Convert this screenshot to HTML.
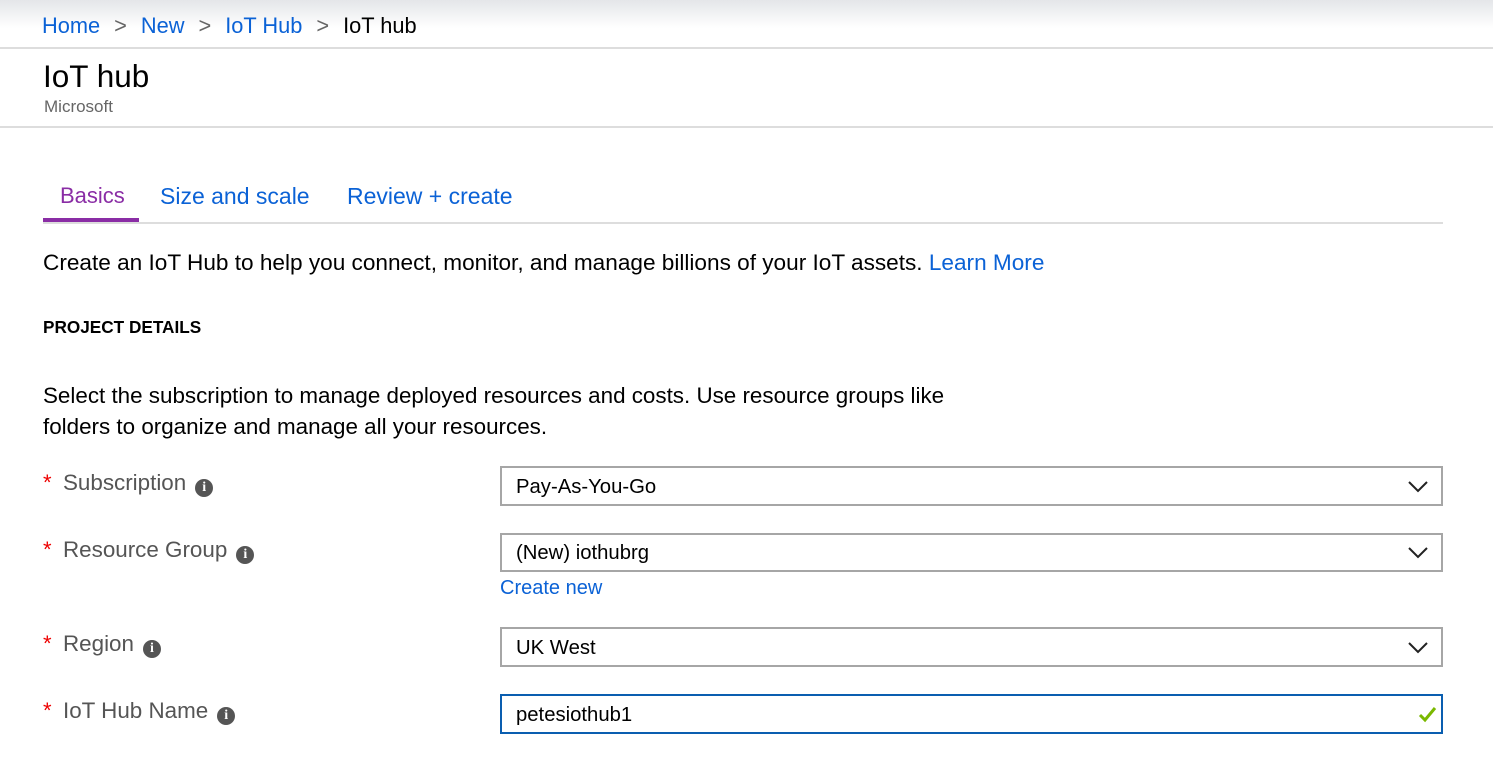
<!DOCTYPE html>
<html><head><meta charset="utf-8"><style>
body{margin:0;width:1493px;height:775px;background:#fff;font-family:"Liberation Sans",sans-serif;position:relative;overflow:hidden;color:#000}
.a{position:absolute;white-space:nowrap}
.blue{color:#0b62d6}
.hdr{position:absolute;left:0;top:0;width:1493px;height:47px;background:linear-gradient(#e4e6e9,#fff 60%);border-bottom:2px solid #ddd}
.box{position:absolute;left:500px;width:939px;border:2px solid #a6a6a6;background:#fff}
.box span{position:absolute;left:14px;font-size:20.3px}
.lab{font-size:22.4px;color:#555}
.star{color:#e00;font-size:22px;display:inline-block;width:20px}
.info{display:inline-block;width:18px;height:18px;border-radius:50%;background:#555;color:#fff;font-size:14px;font-weight:bold;text-align:center;line-height:18px;font-family:"Liberation Serif",serif;vertical-align:-1px;margin-left:9px}
</style></head><body>
<div class="hdr"></div>
<div class="a" style="left:42px;top:13px;font-size:21.8px"><span class="blue">Home</span><span style="color:#666;margin:0 14px">&gt;</span><span class="blue">New</span><span style="color:#666;margin:0 14px">&gt;</span><span class="blue">IoT Hub</span><span style="color:#666;margin:0 14px">&gt;</span><span>IoT hub</span></div>
<div class="a" style="left:43px;top:58px;font-size:31.5px">IoT hub</div>
<div class="a" style="left:44px;top:97px;font-size:17px;color:#666">Microsoft</div>
<div class="a" style="left:0;top:126px;width:1493px;height:2px;background:#ddd"></div>
<div class="a" style="left:60px;top:183px;font-size:22px;color:#8a2da5">Basics</div>
<div class="a blue" style="left:160px;top:183px;font-size:23px">Size and scale</div>
<div class="a blue" style="left:347px;top:183px;font-size:23px">Review + create</div>
<div class="a" style="left:43px;top:222px;width:1400px;height:2px;background:#ddd"></div>
<div class="a" style="left:43px;top:218px;width:96px;height:4px;background:#8a2da5"></div>
<div class="a" style="left:43px;top:250px;font-size:22.6px">Create an IoT Hub to help you connect, monitor, and manage billions of your IoT assets. <span class="blue">Learn More</span></div>
<div class="a" style="left:43px;top:317px;font-size:17.2px;font-weight:bold">PROJECT DETAILS</div>
<div class="a" style="left:43px;top:380px;font-size:22.4px;line-height:31px">Select the subscription to manage deployed resources and costs. Use resource groups like<br>folders to organize and manage all your resources.</div>

<div class="a" style="left:43px;top:470px"><span class="star">*</span><span class="lab">Subscription</span><span class="info">i</span></div>
<div class="a" style="left:43px;top:537px"><span class="star">*</span><span class="lab">Resource Group</span><span class="info">i</span></div>
<div class="a" style="left:43px;top:631px"><span class="star">*</span><span class="lab">Region</span><span class="info">i</span></div>
<div class="a" style="left:43px;top:698px"><span class="star">*</span><span class="lab">IoT Hub Name</span><span class="info">i</span></div>

<div class="box" style="top:466px;height:36px"><span style="top:8px">Pay-As-You-Go</span></div>
<div class="box" style="top:533px;height:35px"><span style="top:7px">(New) iothubrg</span></div>
<div class="a blue" style="left:500px;top:577px;font-size:20px">Create new</div>
<div class="box" style="top:627px;height:36px"><span style="top:8px">UK West</span></div>
<div class="box" style="top:694px;height:36px;border-color:#0a5eb0"><span style="top:8px">petesiothub1<span style="border-left:1px solid #000;margin-left:1px"></span></span></div>
<svg class="a" style="left:1408px;top:481px" width="20" height="12"><path d="M1 1L10 10L19 1" fill="none" stroke="#222" stroke-width="2"/></svg>
<svg class="a" style="left:1408px;top:547px" width="20" height="12"><path d="M1 1L10 10L19 1" fill="none" stroke="#222" stroke-width="2"/></svg>
<svg class="a" style="left:1408px;top:642px" width="20" height="12"><path d="M1 1L10 10L19 1" fill="none" stroke="#222" stroke-width="2"/></svg>
<svg class="a" style="left:1418px;top:706px" width="20" height="18"><path d="M2 9L7 14L17 2" fill="none" stroke="#7ab800" stroke-width="3"/></svg>
</body></html>
